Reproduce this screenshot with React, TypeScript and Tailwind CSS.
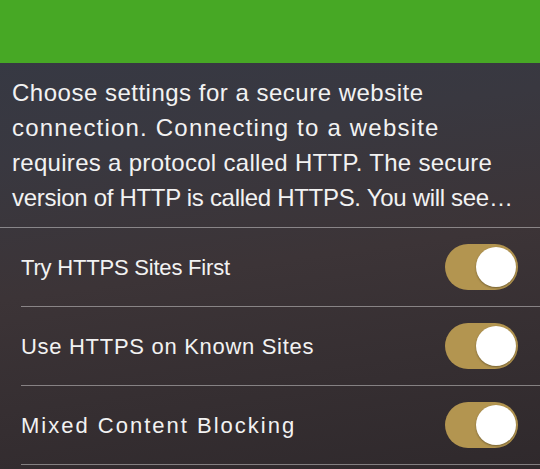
import { useState } from "react"

// tracking per row so the widths follow the original (wider) typeface
const rows = [
    { label: "Try HTTPS Sites First", track: "tracking-[-0.2px]" },
    { label: "Use HTTPS on Known Sites", track: "tracking-[0.7px]" },
    { label: "Mixed Content Blocking", track: "tracking-[2px]" },
]

const intro = [
    { text: "Choose settings for a secure website", track: "tracking-[0.5px]" },
    { text: "connection. Connecting to a website", track: "tracking-[1.2px]" },
    { text: "requires a protocol called HTTP. The secure", track: "tracking-[0.3px]" },
    { text: "version of HTTP is called HTTPS. You will see…", track: "tracking-[-0.3px]" },
]

function Toggle({ on, onChange }: { on: boolean; onChange: () => void }) {
    return (
        <button
            onClick={onChange}
            className={`relative w-[73px] h-[46px] rounded-full shrink-0 ${on ? "bg-[#b39550]" : "bg-[#5a5a5a]"}`}
        >
            <span
                className={`absolute top-[3px] w-[40px] h-[40px] rounded-full bg-white shadow-[0_1px_2px_rgba(0,0,0,0.35)] ${on ? "right-[2px]" : "left-[2px]"}`}
            />
        </button>
    )
}

export default function App() {
    const [settings, setSettings] = useState([true, true, true])

    const toggle = (i: number) => {
        setSettings(settings.map((v, idx) => (idx === i ? !v : v)))
    }

    return (
        <div className="w-[540px] h-[469px] overflow-hidden flex flex-col bg-[linear-gradient(172deg,#353945_0%,#393840_30%,#3c3437_55%,#2f292c_100%)] font-['Liberation_Sans',sans-serif] text-[#f2f2f2]">
            <div className="h-[63px] bg-[#47a825] shrink-0" />

            <div className="px-[12px] pt-[12px] pb-[12px] text-[24px] leading-[35px] border-b border-white/40 whitespace-nowrap">
                {intro.map((line) => (
                    <p key={line.text} className={line.track}>{line.text}</p>
                ))}
            </div>

            <div className="flex flex-col">
                {rows.map((row, i) => (
                    <div key={row.label} className="pl-[21px]">
                        <div className="h-[79px] flex items-center justify-between pr-[22px] border-b border-white/40">
                            <span className={`text-[22px] ${row.track}`}>{row.label}</span>
                            <Toggle on={settings[i]} onChange={() => toggle(i)} />
                        </div>
                    </div>
                ))}
            </div>
        </div>
    )
}
